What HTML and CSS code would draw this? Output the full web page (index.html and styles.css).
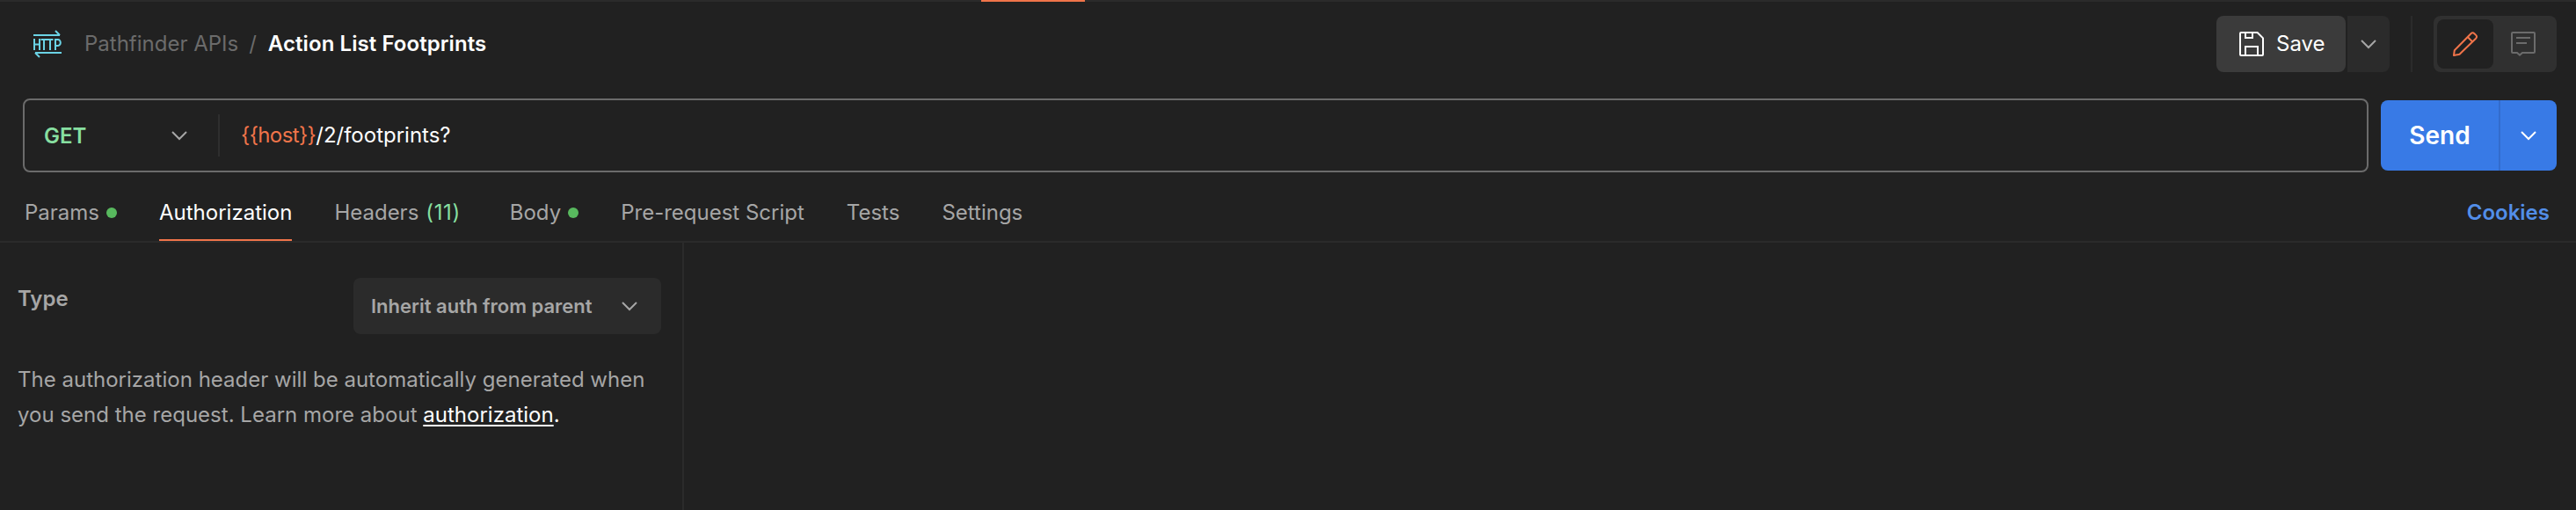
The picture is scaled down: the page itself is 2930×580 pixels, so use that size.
FILE: index.html
```html
<!DOCTYPE html>
<html lang="en">
<head>
<meta charset="utf-8">
<title>Action List Footprints</title>
<link rel="stylesheet" href="styles.css">
</head>
<body>
<div class="tabstrip"><div class="tabstrip-active"></div></div>
<header class="header">
  <svg class="http-icon" width="32" height="32" viewBox="0 0 32 32" fill="none" stroke="#6bd3e5" stroke-width="2"><path d="M0 6H30M25 1l5 5M32 26H2M7 31l-5-5"/><path d="M1 10v13M7 10v13M1 16.500h6M8.500 11h7M12 11v12M15.500 11h7M19 11v12M25 23V11h3a2.800 3.500 0 0 1 0 7H25"/></svg>
  <nav class="crumbs"><span class="crumb-parent">Pathfinder APIs</span><span class="crumb-sep">/</span><span class="crumb-current">Action List Footprints</span></nav>
  <div class="save-group">
    <button class="save"><svg width="28" height="28" viewBox="0 0 28 28" fill="none" stroke="#fff" stroke-width="2"><path d="M2 1h18.600L27 7.400V26a1 1 0 0 1-1 1H2a1 1 0 0 1-1-1V2a1 1 0 0 1 1-1z"/><path d="M7 1v6h8V1M7 27V17h14v10"/></svg><span class="save-text">Save</span></button>
    <button class="save-more"><svg class="chevron" width="18" height="10" viewBox="0 0 18 10"><path d="M1 1l8 8 8-8"/></svg></button>
  </div>
  <div class="header-divider"></div>
  <div class="modes">
    <button class="mode mode-on"><svg width="28" height="28" viewBox="0 0 28 28" fill="none" stroke="#f0744a" stroke-width="2" stroke-linejoin="round"><path d="M1 27l.8-5.800L20.500 2.200a2.800 2.800 0 0 1 3.900 0l1.700 1.700a2.800 2.800 0 0 1 0 3.900L7.500 25.800z"/><path d="M16.700 6l5.500 5.500"/></svg></button>
    <button class="mode"><svg width="28" height="28" viewBox="0 0 28 28" fill="none" stroke="#6b6b6b" stroke-width="2"><path d="M2 1h24a1 1 0 0 1 1 1v21a1 1 0 0 1-1 1H13l-3 2.600L7 24H2a1 1 0 0 1-1-1V2a1 1 0 0 1 1-1zM6 7h16M6 13h12"/></svg></button>
  </div>
</header>
<section class="request">
  <div class="url-box">
    <div class="method"><span class="method-name">GET</span><svg class="chevron" width="18" height="10" viewBox="0 0 18 10"><path d="M1 1l8 8 8-8"/></svg></div>
    <div class="url"><span class="variable">{{host}}</span><span class="path">/2/footprints?</span></div>
  </div>
  <div class="send-group">
    <button class="send"><span class="send-text">Send</span></button>
    <button class="send-more"><svg class="chevron chevron-light" width="18" height="10" viewBox="0 0 18 10"><path d="M1 1l8 8 8-8"/></svg></button>
  </div>
</section>
<nav class="tabs">
  <a class="tab params"><span>Params</span><i class="dot"></i></a>
  <a class="tab active"><span>Authorization</span></a>
  <a class="tab headers"><span>Headers</span><span class="count">(11)</span></a>
  <a class="tab body-tab"><span>Body</span><i class="dot"></i></a>
  <a class="tab"><span>Pre-request Script</span></a>
  <a class="tab"><span>Tests</span></a>
  <a class="tab"><span>Settings</span></a>
  <a class="cookies">Cookies</a>
</nav>
<main class="content">
  <aside class="auth">
    <div class="type-row"><span class="type-label">Type</span>
      <div class="select"><span class="select-text">Inherit auth from parent</span><svg class="chevron" width="18" height="10" viewBox="0 0 18 10"><path d="M1 1l8 8 8-8"/></svg></div>
    </div>
    <p class="help">The authorization header will be automatically generated when<br>you send the request. Learn more about <a class="help-link">authorization</a><span class="stop">.</span></p>
  </aside>
  <div class="detail"></div>
</main>
</body>
</html>
```
FILE: styles.css
```css
* { box-sizing: border-box; }
html { height: 100%; overflow: hidden; background: #212121; }
body { margin: 0; height: 100%; display: flex; flex-direction: column; overflow: hidden; color: #a6a6a6; font-family: Inter, sans-serif; font-size: 24px; line-height: 32px; }
button { border: 0; padding: 0; font: inherit; color: #fff; display: flex; align-items: center; }
svg { display: block; flex: none; overflow: visible; }
span { white-space: nowrap; }
.chevron { fill: none; stroke: #a6a6a6; stroke-width: 2; }
.chevron-light { stroke: #fff; }
.tabstrip { height: 2px; background: #2b2b2b; flex: none; }
.tabstrip-active { width: 118px; height: 2px; margin-left: 1116px; background: #f0744a; }
.header { height: 96px; flex: none; display: flex; align-items: center; padding: 0 22px 0 38px; }
.http-icon { margin-right: 26px; }
.crumbs { display: flex; flex: 1; color: #6b6b6b; }
.crumb-sep { margin: 0 13px 0 12px; }
.crumb-current { color: #fff; font-weight: 600; letter-spacing: 0.07px; }
.save-group { display: flex; gap: 2px; }
.save { width: 147px; height: 64px; padding-left: 26px; gap: 14px; background: #3b3b3b; border-radius: 8px; }
.save-more { width: 48px; height: 64px; justify-content: center; background: #2b2b2b; border-radius: 0 8px 8px 0; }
.header-divider { width: 2px; height: 64px; margin: 0 24px; background: #2b2b2b; }
.modes { width: 140px; height: 64px; padding: 4px; display: flex; background: #303030; border-radius: 8px; }
.mode { width: 64px; height: 56px; justify-content: center; border-radius: 8px; background: transparent; }
.mode-on { background: #212121; margin-right: 2px; }
.request { height: 112px; flex: none; display: flex; align-items: center; gap: 14px; padding: 0 22px 0 26px; }
.url-box { flex: 1; height: 84px; display: flex; align-items: center; border: 2px solid #6b6b6b; border-radius: 8px; }
.method { width: 222px; height: 48px; display: flex; align-items: center; justify-content: space-between; padding: 0 35px 0 22px; border-right: 2px solid #2e2e2e; color: #87dfa0; font-weight: 600; }
.method-name { padding-top: 2px; }
.url { display: flex; padding-left: 24px; color: #fff; }
.variable { color: #f0744a; letter-spacing: -0.6px; }
.path { letter-spacing: 0; }
.send-group { display: flex; width: 200px; height: 80px; background: #387ae6; border-radius: 8px; }
.send { width: 134px; justify-content: center; background: transparent; font-size: 28px; font-weight: 600; }
.send-more { width: 66px; justify-content: center; background: transparent; border-left: 2px solid #336ccd; }
.tabs { height: 66px; flex: none; display: flex; gap: 48px; padding: 0 30px 0 28px; border-bottom: 2px solid #2b2b2b; }
.tab { display: flex; align-items: center; height: 64px; }
.active { color: #fff; border-bottom: 2px solid #f0744a; padding-top: 2px; }
.dot { width: 12px; height: 12px; margin-left: 8px; border-radius: 50%; background: #58b95e; }
.count { margin-left: 8px; color: #87dfa0; letter-spacing: 0.6px; }
.headers { margin-right: 8px; }
.cookies { margin-left: auto; line-height: 64px; color: #528ee8; font-weight: 600; }
.content { flex: 1; display: flex; }
.auth { width: 778px; padding: 40px 24px 0 20px; border-right: 2px solid #2b2b2b; }
.type-row { display: flex; justify-content: space-between; }
.type-label { padding-top: 8px; font-weight: 600; }
.select { width: 350px; height: 64px; display: flex; align-items: center; justify-content: space-between; padding: 0 27px 0 20px; background: #2b2b2b; border-radius: 8px; font-size: 22px; font-weight: 600; }
.help { margin: 32px 0 0; line-height: 40px; white-space: nowrap; letter-spacing: 0.01px; }
.help-link { color: #fff; text-decoration: underline; text-decoration-thickness: 2px; text-underline-offset: 3px; text-decoration-skip-ink: none; }
.stop { color: #fff; }
```
